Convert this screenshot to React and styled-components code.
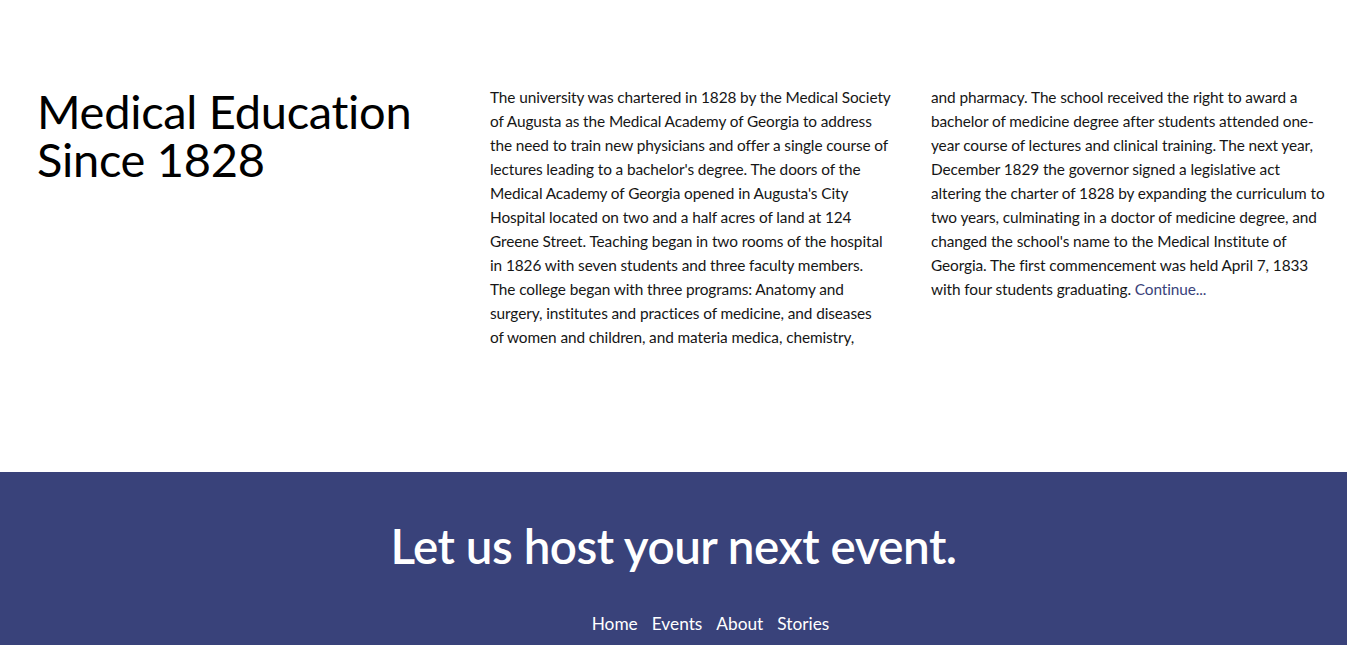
import React from "react";
import styled, { createGlobalStyle } from "styled-components";

const Global = createGlobalStyle`
  html, body { margin: 0; padding: 0; background: #fff; }
  body { font-family: Lato, "Open Sans", sans-serif; color: #111; }
`;

const Page = styled.div`
  display: flex;
  flex-direction: column;
`;

const History = styled.section`
  display: grid;
  grid-template-columns: 453px 441px 1fr;
  padding: 85px 16px 0 37px;
  height: 472px;
  box-sizing: border-box;
`;

const Title = styled.h1`
  margin: 2px 0 0;
  font-family: Lato, sans-serif;
  font-weight: 400;
  font-size: 47px;
  line-height: 48px;
  letter-spacing: -0.3px;
  color: #000;
`;

const Column = styled.p`
  margin: 0;
  font-size: 15.4px;
  line-height: 24px;
  color: #161616;
  white-space: nowrap;
  letter-spacing: -0.1px;
`;

const More = styled.a`
  color: #39427a;
  text-decoration: none;
`;

const Footer = styled.footer`
  background: #39427a;
  color: #fff;
  display: flex;
  flex-direction: column;
  align-items: center;
  padding-top: 46px;
  height: 173px;
  box-sizing: border-box;
`;

const Cta = styled.h2`
  margin: 0;
  font-family: Lato, sans-serif;
  font-weight: 600;
  font-size: 47.6px;
  line-height: 56px;
  letter-spacing: -0.5px;
`;

const Nav = styled.nav`
  display: flex;
  gap: 14px;
  margin-top: 38px;
  padding-left: 74px;
`;

const NavLink = styled.a`
  color: #fff;
  text-decoration: none;
  font-size: 17.3px;
  line-height: 24px;
`;

const col1 = [
  "The university was chartered in 1828 by the Medical Society",
  "of Augusta as the Medical Academy of Georgia to address",
  "the need to train new physicians and offer a single course of",
  "lectures leading to a bachelor's degree. The doors of the",
  "Medical Academy of Georgia opened in Augusta's City",
  "Hospital located on two and a half acres of land at 124",
  "Greene Street. Teaching began in two rooms of the hospital",
  "in 1826 with seven students and three faculty members.",
  "The college began with three programs: Anatomy and",
  "surgery, institutes and practices of medicine, and diseases",
  "of women and children, and materia medica, chemistry,",
];

const col2 = [
  "and pharmacy. The school received the right to award a",
  "bachelor of medicine degree after students attended one-",
  "year course of lectures and clinical training. The next year,",
  "December 1829 the governor signed a legislative act",
  "altering the charter of 1828 by expanding the curriculum to",
  "two years, culminating in a doctor of medicine degree, and",
  "changed the school's name to the Medical Institute of",
  "Georgia. The first commencement was held April 7, 1833",
  "with four students graduating. ",
];

const lines = (arr) =>
  arr.map((l, i) => (
    <React.Fragment key={i}>
      {l}
      {i < arr.length - 1 && <br />}
    </React.Fragment>
  ));

export default function App() {
  return (
    <Page>
      <Global />
      <History>
        <Title>
          Medical Education
          <br />
          Since 1828
        </Title>
        <Column>{lines(col1)}</Column>
        <Column>
          {lines(col2)}
          <More href="#">Continue...</More>
        </Column>
      </History>
      <Footer>
        <Cta>Let us host your next event.</Cta>
        <Nav>
          <NavLink href="#">Home</NavLink>
          <NavLink href="#">Events</NavLink>
          <NavLink href="#">About</NavLink>
          <NavLink href="#">Stories</NavLink>
        </Nav>
      </Footer>
    </Page>
  );
}
